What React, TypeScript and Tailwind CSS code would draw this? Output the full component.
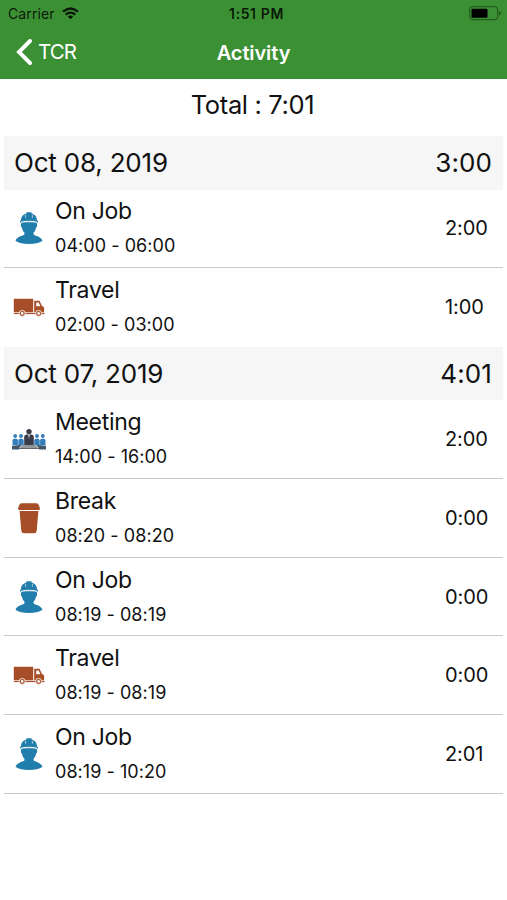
import React from 'react';

type Kind = 'job' | 'travel' | 'meeting' | 'break';

interface Entry {
  kind: Kind;
  title: string;
  range: string;
  total: string;
}

interface Day {
  date: string;
  total: string;
  entries: Entry[];
}

const days: Day[] = [
  {
    date: 'Oct 08, 2019',
    total: '3:00',
    entries: [
      { kind: 'job', title: 'On Job', range: '04:00 - 06:00', total: '2:00' },
      { kind: 'travel', title: 'Travel', range: '02:00 - 03:00', total: '1:00' },
    ],
  },
  {
    date: 'Oct 07, 2019',
    total: '4:01',
    entries: [
      { kind: 'meeting', title: 'Meeting', range: '14:00 - 16:00', total: '2:00' },
      { kind: 'break', title: 'Break', range: '08:20 - 08:20', total: '0:00' },
      { kind: 'job', title: 'On Job', range: '08:19 - 08:19', total: '0:00' },
      { kind: 'travel', title: 'Travel', range: '08:19 - 08:19', total: '0:00' },
      { kind: 'job', title: 'On Job', range: '08:19 - 10:20', total: '2:01' },
    ],
  },
];

// All glyphs share a 36x36 box
const EntryIcon: React.FC<{ kind: Kind }> = ({ kind }) => {
  switch (kind) {
    case 'job':
      return (
        <svg viewBox="0 0 36 36" className="size-9 shrink-0" fill="#217dab">
          <path d="M10 10.200C10 6.500 12.300 4.200 15.500 3.400V2.200h5v1.200c3.200.8 5.500 3.100 5.500 6.800l1 1.100v1.200H9v-1.200z" />
          <path d="M10.300 12.500h15.400c0 1.500.7 2 .3 3.700-.2.900-.7 1.300-1 1.500-.4 2.300-1.300 3.800-2.400 4.900v2c1.500 1.300 7.600 2 8.900 6.200-3 2.200-7.800 3.300-13.500 3.300S7.500 33 4.500 30.800c1.300-4.200 7.400-4.900 8.900-6.200v-2c-1.100-1.100-2-2.600-2.400-4.900-.3-.2-.8-.6-1-1.500-.4-1.700.3-2.200.3-3.700z" />
          <path d="M14.600 4.800v3M21.400 4.800v3" stroke="#fff" strokeWidth=".6" />
          <path d="M10 12.300q8-2.200 16 0" stroke="#fff" strokeWidth="1.100" fill="none" />
        </svg>
      );
    case 'travel':
      return (
        <svg viewBox="0 0 36 36" className="size-9 shrink-0">
          <path d="M2.800 9.800h19.400v13.500H2.800zM23.200 11.800h5.300l2.500 5.100 2.100 1.400v5H23.200z" fill="#a64e28" />
          <path d="M25.200 13.400h2.500l1.700 3.800h-4.200z" fill="#fff" />
          <path d="M2.800 23.900h30.700v1.200H2.800z" fill="#a64e28" />
          <g fill="#a64e28" stroke="#fff" strokeWidth=".8">
            <circle cx="11.200" cy="24.400" r="3" />
            <circle cx="27.600" cy="24.400" r="3" />
          </g>
          <circle cx="11.200" cy="24.400" r="1.300" fill="#fff" />
          <circle cx="27.600" cy="24.400" r="1.300" fill="#fff" />
        </svg>
      );
    case 'meeting':
      return (
        <svg viewBox="0 0 36 36" className="size-9 shrink-0">
          {[4.2, 10, 26, 31.8].map((x) => (
            <g key={x} fill="#347dbb">
              <circle cx={x} cy="15" r="1.900" />
              <path d={`M${x - 2.7} 24v-4.500q0-1.700 1.700-1.700h2q1.700 0 1.700 1.700V24z`} />
            </g>
          ))}
          <circle cx="18" cy="10.600" r="2.700" fill="#393d4a" />
          <path d="M13.200 24v-7.800q0-2.600 2.600-2.600h4.400q2.600 0 2.600 2.600V24z" fill="#393d4a" />
          <path d="M17.300 13.600h1.400l-.7 4.500z" fill="#fff" />
          <path d="M11.500 24h13l2.500 2.700H9z" fill="#92979b" />
          <path d="M1 24.700l10-1-3 3.200v1.600H1zM35 24.700l-10-1 3 3.200v1.600h7z" fill="#40586d" />
          <path d="M8 26.700h20v1.300H8z" fill="#60666b" />
        </svg>
      );
    case 'break':
      return (
        <svg viewBox="0 0 36 36" className="size-9 shrink-0" fill="#a64e28">
          <path d="M10.400 3.200h15.200q1.500 0 2 1.500l1.300 3.400q.3 1.900-1.200 1.900H8.300q-1.500 0-1.200-1.900l1.300-3.400q.5-1.500 2-1.500z" />
          <path d="M8.600 11.100h18.800l-1.700 19.700q-.3 2.500-2.700 2.500H13q-2.400 0-2.700-2.500z" />
        </svg>
      );
  }
};

const StatusBar: React.FC = () => (
  <div className="grid h-[27px] grid-cols-3 items-center text-black/85">
    <div className="flex items-center gap-[7px] pl-[8px]">
      <span className="text-[14px] leading-none tracking-[0.1px]">Carrier</span>
      <svg width="17" height="13" viewBox="0 0 17 13" fill="none" stroke="currentColor" strokeWidth="2.300">
        <path d="M1 4.700q7.500-6.500 15 0M3.700 7.600q4.800-4 9.600 0" />
        <path d="M5.800 9.500q2.700-2.200 5.400 0L8.500 12.300z" fill="currentColor" stroke="none" />
      </svg>
    </div>
    <div className="flex justify-center pl-[6px]">
      <span className="text-[14px] leading-none font-semibold tracking-[0.6px]">1:51 PM</span>
    </div>
    <div className="flex justify-end pr-[6px]">
      <svg width="32" height="15" viewBox="0 0 32 15">
        <rect x=".7" y=".7" width="28" height="13" rx="3" fill="none" stroke="#000" strokeOpacity=".45" />
        <rect x="2.500" y="2.700" width="16" height="9" rx="1" fill="#000" />
        <path d="M30 5v4.500q1.700-.5 1.700-2.200T30 5z" fill="#000" fillOpacity=".45" />
      </svg>
    </div>
  </div>
);

const App: React.FC = () => {
  return (
    <div className="min-h-[900px] w-full bg-white font-['Inter',sans-serif] whitespace-nowrap text-[#111]">
      <header className="h-[79px] bg-[#3c9034]">
        <StatusBar />
        <div className="grid h-[50px] grid-cols-3 items-center text-white">
          <button className="flex items-center gap-[5px] pl-[16px]">
            <svg width="17" height="26" viewBox="0 0 17 26" fill="none" stroke="currentColor" strokeWidth="3.900" strokeLinecap="round">
              <path d="M14 2L3 13l11 11" />
            </svg>
            <span className="pt-px text-[20.500px] leading-none tracking-[-0.9px]">TCR</span>
          </button>
          <h1 className="pt-[2px] text-center text-[20px] leading-none font-semibold tracking-[-0.1px]">Activity</h1>
        </div>
      </header>

      <div className="flex h-[57px] items-center justify-center pr-[2px] pb-[5px]">
        <span className="text-[25.5px] leading-none tracking-[-0.350px]">Total : 7:01</span>
      </div>

      <main className="px-[4px]">
        {days.map((day, d) => (
          <section key={day.date}>
            <div className="flex h-[53.5px] items-center justify-between bg-[#f6f6f6] pr-[11px] pl-[10px] text-[26px] leading-none">
              <span className="tracking-[-0.2px]">{day.date}</span>
              <span className="tracking-[0.1px]">{day.total}</span>
            </div>
            {day.entries.map((entry, i) => (
              <div
                key={i}
                className={`flex h-[78.7px] items-center border-b pr-[15px] pl-[7px] ${
                  d < days.length - 1 && i === day.entries.length - 1 ? 'border-transparent' : 'border-[#c9c9c9]'
                }`}
              >
                <EntryIcon kind={entry.kind} />
                <div className="ml-[8px] grow">
                  <div className="text-[23px] leading-[36px] tracking-[-0.3px]">{entry.title}</div>
                  <div className="text-[18px] leading-[34px] tracking-[0.050px]">{entry.range}</div>
                </div>
                <span className="w-[43px] text-[20px] leading-none tracking-[-0.1px]">{entry.total}</span>
              </div>
            ))}
          </section>
        ))}
      </main>
    </div>
  );
};

export default App;
